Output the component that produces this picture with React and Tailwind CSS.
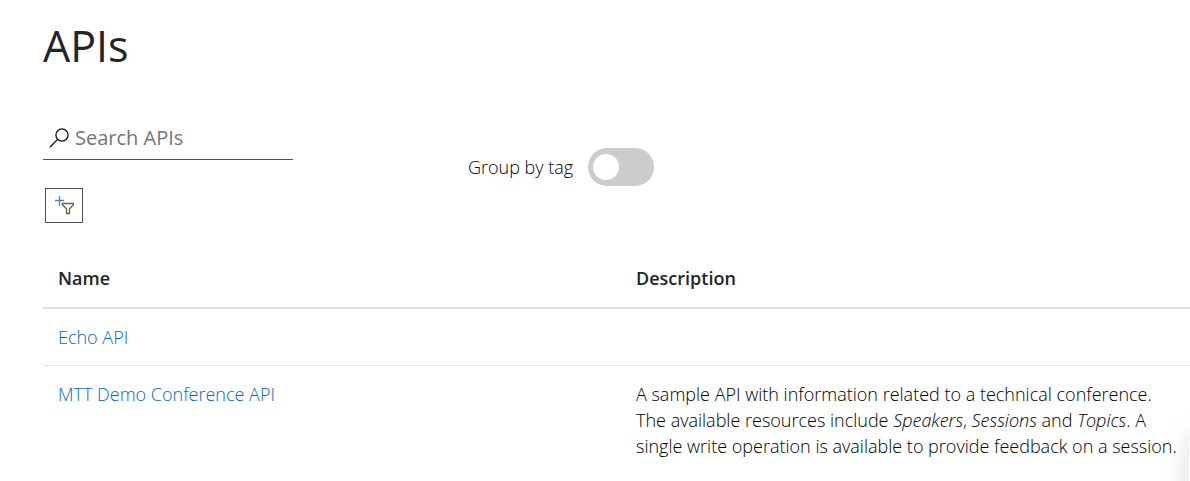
const apis = [
  { name: "Echo API", description: null },
  {
    name: "MTT Demo Conference API",
    description: (
      <>
        A sample API with information related to a technical conference. The available resources
        include <em>Speakers</em>, <em>Sessions</em> and <em>Topics</em>. A single write operation is
        available to provide feedback on a session.
      </>
    ),
  },
];

function SearchIcon() {
  return (
    <svg className="size-5 shrink-0" viewBox="0 0 20 20" fill="none" stroke="#111" strokeWidth="1.3" aria-hidden="true">
      <circle cx="13" cy="7" r="6.1" />
      <path d="M8.6 11.4 0.8 19.2" />
    </svg>
  );
}

function AddFilterIcon() {
  return (
    <svg className="h-5 w-5" viewBox="0 0 20 20" fill="none" aria-hidden="true">
      <path d="M5.5 0v10M1 4.5h9" stroke="#5b7f9f" strokeWidth="1.3" />
      <path d="M8.3 7.5h11.4v1l-4.2 4.3v4.7h-3v-4.7l-4.2-4.3z" stroke="#6a6040" strokeWidth="1.3" />
    </svg>
  );
}

export default function App() {
  return (
    <div className="min-h-screen overflow-hidden bg-white pl-[43px] font-['Open_Sans',sans-serif] text-lg leading-[26px] font-light text-[#212529]">
      <main className="-mr-[9px]">
        <h1 className="pt-5 text-[43px] leading-[52px] font-normal">APIs</h1>

        <div className="grid grid-cols-[425px_1fr] pt-11">
          <div>
            <label className="flex h-11 w-[250px] items-center gap-1.5 border-b border-[#505050] pl-1.5">
              <SearchIcon />
              <input
                type="search"
                aria-label="Search APIs"
                placeholder="Search APIs"
                className="w-full min-w-0 bg-transparent text-xl font-normal outline-none placeholder:text-[#757575]"
              />
            </label>
            <button
              type="button"
              aria-label="Add filter"
              className="mt-7 ml-0.5 flex h-[35px] w-[38px] items-center justify-center border border-[#505050]"
            >
              <AddFilterIcon />
            </button>
          </div>
          <label className="mt-8 flex h-[38px] items-center gap-[15px] self-start text-black">
            Group by tag
            <input
              type="checkbox"
              role="switch"
              className="h-[38px] w-[66px] appearance-none rounded-full bg-[#ccc] px-[5px] py-[6px] before:block before:size-[26px] before:rounded-full before:bg-white checked:bg-[#0078d4] checked:before:ml-7"
            />
          </label>
        </div>

        <table className="mt-[26px] w-full table-fixed text-left">
          <thead>
            <tr className="border-b-2 border-[#dee2e6]">
              <th className="px-[15px] py-4 font-semibold">Name</th>
              <th className="px-[15px] py-4 font-semibold">Description</th>
            </tr>
          </thead>
          <tbody>
            {apis.map((api) => (
              <tr key={api.name} className="border-b border-[#dee2e6] align-top last:border-b-0">
                <td className="p-[15px]">
                  <a href="#" className="text-[#006acb]">{api.name}</a>
                </td>
                <td className="p-[15px] text-black">{api.description}</td>
              </tr>
            ))}
          </tbody>
        </table>
      </main>
      <aside
        aria-hidden="true"
        className="fixed -right-[79px] -bottom-10 h-[86px] w-20 rounded-lg bg-white shadow-[0_0_32px_rgba(0,0,0,0.14)]"
      />
    </div>
  );
}
